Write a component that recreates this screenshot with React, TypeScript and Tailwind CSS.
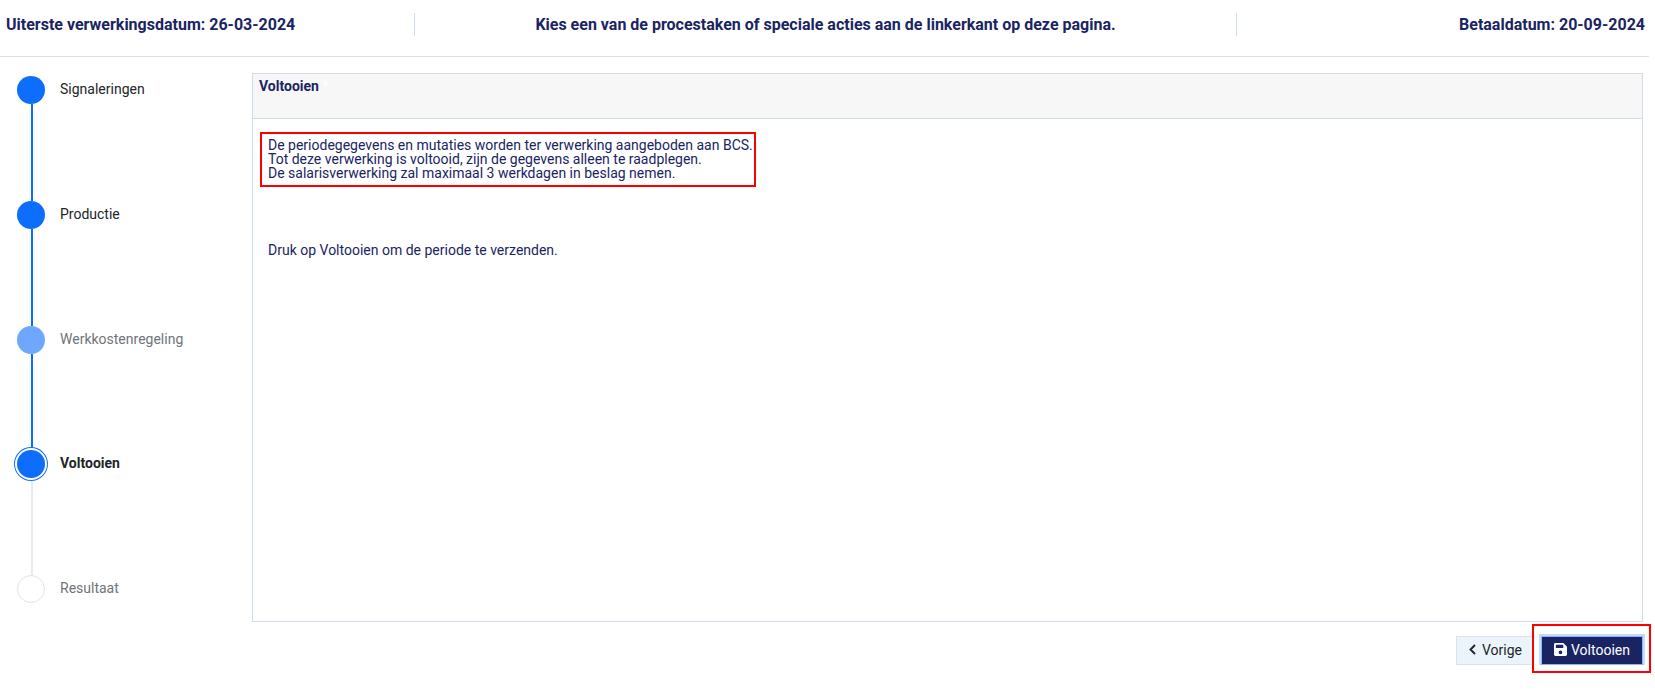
import React from 'react'
import { clsx } from 'clsx'

type StepState = 'done' | 'skipped' | 'current' | 'todo'

const steps: { label: string; state: StepState }[] = [
  { label: 'Signaleringen', state: 'done' },
  { label: 'Productie', state: 'done' },
  { label: 'Werkkostenregeling', state: 'skipped' },
  { label: 'Voltooien', state: 'current' },
  { label: 'Resultaat', state: 'todo' }
]

const TopBar: React.FC = () => (
  <header className="flex h-[57px] w-[1649px] border-b border-[#dee2e6] pt-[13px] text-base leading-[23px] font-bold text-[#1a2463]">
    <div className="h-[23px] w-[415px] border-r border-[#ccdcea] pl-1.5">
      Uiterste verwerkingsdatum: 26-03-2024
    </div>
    <div className="h-[23px] w-[822px] border-r border-[#ccdcea] text-center">
      Kies een van de procestaken of speciale acties aan de linkerkant op deze pagina.
    </div>
    <div className="h-[23px] flex-1 pr-1 text-right">Betaaldatum: 20-09-2024</div>
  </header>
)

const Stepper: React.FC = () => (
  <ol className="w-[252px] shrink-0 pt-[19px] pl-[17px]">
    {steps.map(({ label, state }, index) => (
      <li
        key={label}
        className={clsx('flex items-start', index < steps.length - 1 ? 'h-[124.75px]' : 'h-7')}
      >
        <div className="flex h-full w-7 flex-col items-center">
          <span
            className={clsx(
              'z-10 size-7 shrink-0 rounded-full',
              state === 'done' && 'bg-[#0d6efd]',
              state === 'skipped' && 'bg-[#6ea8fe]',
              state === 'current' && 'bg-[#0d6efd] shadow-[0_0_0_2px_#fff,0_0_0_3px_#0d6efd]',
              state === 'todo' && 'border border-[#e2e3e5] bg-white'
            )}
          />
          {index < steps.length - 1 && (
            <span
              className={clsx(
                'ml-[2px] w-0.5 flex-1',
                state === 'current' ? 'bg-[#e9ecef]' : 'bg-[#0d6efd]'
              )}
            />
          )}
        </div>
        <span
          className={clsx(
            'ml-[15px] text-sm leading-[26px]',
            state === 'done' && 'text-[#212529]',
            state === 'current' && 'font-bold text-[#212529]',
            (state === 'skipped' || state === 'todo') && 'text-[#6f7478]'
          )}
        >
          {label}
        </span>
      </li>
    ))}
  </ol>
)

const Panel: React.FC = () => (
  <section className="h-[549px] border border-[#d0dcea] text-sm text-[#1a2463]">
    <h2 className="h-[45px] border-b border-[#ccdcea] bg-[#f7f7f7] px-1.5 pt-[3px] leading-[18px] font-bold">
      Voltooien <span className="font-normal text-white">*</span>
    </h2>
    <div className="px-[7px] pt-[13px]">
      <p className="h-[55px] w-[496px] border-2 border-[#ff0000] pt-1 pl-1.5 leading-[14px] whitespace-nowrap">
        De periodegegevens en mutaties worden ter verwerking aangeboden aan BCS.
        <br />
        Tot deze verwerking is voltooid, zijn de gegevens alleen te raadplegen.
        <br />
        De salarisverwerking zal maximaal 3 werkdagen in beslag nemen.
      </p>
      <p className="mt-14 pl-2 leading-[14px]">Druk op Voltooien om de periode te verzenden.</p>
    </div>
  </section>
)

const Actions: React.FC = () => (
  <div className="relative flex justify-end gap-[7px] pt-3.5 text-sm">
    <button className="flex h-[29px] w-[78px] items-center border border-[#dbe2ea] bg-[#ebf4fa] pb-0.5 pl-3 text-[#212529]">
      <svg className="mr-1.5 h-[11px] w-[7px]" viewBox="0 0 7 11" fill="none" stroke="currentColor" strokeWidth="1.9">
        <path d="M6 1 1.5 5.5 6 10" />
      </svg>
      Vorige
    </button>
    <button className="flex h-[29px] w-[102px] items-center border border-[#86b7fe] bg-[#1a2463] pb-0.5 pl-3 text-white shadow-[-2px_-2px_0_#c2dbfe,2px_-2px_0_#c2dbfe,2px_0_0_#c2dbfe,-2px_0_0_#c2dbfe]">
      <svg className="mr-1 size-[13px]" viewBox="0 0 448 448" fill="currentColor">
        <path
          fillRule="evenodd"
          d="M48 0H320L434 114Q448 128 448 146V400Q448 448 400 448H48Q0 448 0 400V48Q0 0 48 0ZM64 80V160Q64 176 80 176H304Q320 176 320 160V80Q320 64 304 64H80Q64 64 64 80ZM224 256A64 64 0 1 0 224 384A64 64 0 1 0 224 256Z"
        />
      </svg>
      Voltooien
    </button>
    <div className="pointer-events-none absolute top-0.5 -right-2 h-[49px] w-[119px] border-2 border-[#ff0000]" />
  </div>
)

const App: React.FC = () => (
  <div className="h-[692px] w-[1655px] overflow-hidden bg-white font-[Roboto,sans-serif]">
    <TopBar />
    <main className="flex">
      <Stepper />
      <div className="w-[1391px] pt-4">
        <Panel />
        <Actions />
      </div>
    </main>
  </div>
)

export default App
